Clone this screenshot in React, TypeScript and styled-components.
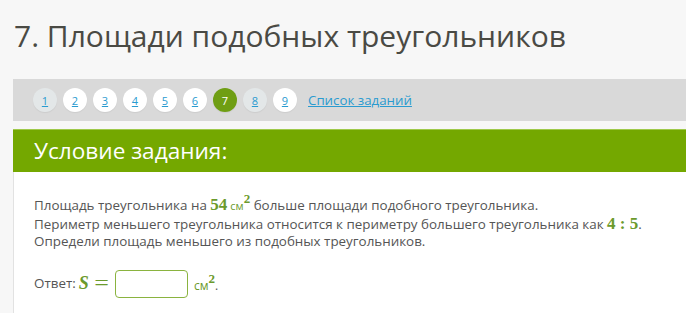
import React from "react";
import styled, { createGlobalStyle } from "styled-components";

const Global = createGlobalStyle`
  html, body { margin: 0; padding: 0; }
  body {
    background: #f7f7f7;
    font-family: "Open Sans", "Noto Sans", sans-serif;
    overflow: hidden;
  }
`;

const Page = styled.div`
  width: 686px;
  height: 313px;
  padding-top: 15px;
  box-sizing: border-box;
  overflow: hidden;
`;

const Title = styled.h1`
  margin: 0 0 23px 14px;
  font-size: 30px;
  line-height: 41px;
  font-weight: 400;
  color: #4a4a44;
  white-space: nowrap;
`;

const Nav = styled.nav`
  margin-left: 13px;
  height: 42px;
  background: #d9d9d9;
  display: flex;
  align-items: center;
  padding-left: 20px;
  gap: 6px;
`;

const Pill = styled.a<{ $state: "visited" | "normal" | "current" }>`
  width: 24px;
  height: 24px;
  border-radius: 50%;
  display: flex;
  align-items: center;
  justify-content: center;
  font-size: 11px;
  color: ${(p) => (p.$state === "current" ? "#ffffff" : "#2a9bd0")};
  text-decoration: ${(p) => (p.$state === "current" ? "none" : "underline")};
  background: ${(p) =>
    p.$state === "current" ? "#6f9e13" : p.$state === "visited" ? "#e3e7e8" : "#ffffff"};
  box-shadow: 0 1px 1px rgba(0, 0, 0, 0.06);
`;

const ListLink = styled.a`
  margin-left: 5px;
  font-size: 13.3px;
  color: #2a9bd0;
  text-decoration: underline;
  white-space: nowrap;
`;

const Card = styled.section`
  margin: 8px 0 0 13px;
`;

const CardHeader = styled.div`
  height: 42px;
  background: #74a800;
  border-top: 1px solid #9fc94a;
  padding-left: 21px;
  color: #ffffff;
  font-size: 22.6px;
  line-height: 42px;
  white-space: nowrap;
`;

const CardBody = styled.div`
  background: #ffffff;
  border-left: 1px solid #e2e2e2;
  padding: 24px 0 0 20px;
  color: #555555;
  font-size: 13.4px;
  line-height: 17.5px;
  height: 150px;
  box-sizing: border-box;
`;

const Line = styled.div`
  white-space: nowrap;
`;

const MathNum = styled.span`
  font-family: "Liberation Serif", "DejaVu Serif", serif;
  font-size: 17px;
  font-weight: 700;
  color: #6b9a2c;
`;

const MathUnit = styled.span`
  font-family: "Open Sans", sans-serif;
  font-size: 11px;
  color: #6b9a2c;
  margin-left: 3px;
`;

const Sup = styled.sup`
  font-family: "Liberation Serif", "DejaVu Serif", serif;
  font-size: 13px;
  font-weight: 700;
  line-height: 0;
  vertical-align: 7px;
  color: #6b9a2c;
`;

const MathVar = styled.span`
  font-family: "Liberation Serif", "DejaVu Serif", serif;
  font-style: italic;
  font-weight: 700;
  font-size: 18px;
  color: #6b9a2c;
  margin-left: 3px;
`;

const AnswerRow = styled.div`
  margin-top: 19px;
  display: flex;
  align-items: center;
  white-space: nowrap;
`;

const Eq = styled.span`
  font-family: "Liberation Serif", "DejaVu Serif", serif;
  font-size: 20px;
  color: #6b9a2c;
  margin: 0 8px 0 7px;
  transform: scaleX(1.3);
`;

const Input = styled.input`
  width: 73px;
  height: 28px;
  box-sizing: border-box;
  border: 1px solid #8ab33f;
  border-radius: 4px;
  background: #fff;
  outline: none;
  margin: 0 6px 0 0;
  padding: 0;
`;

const UnitGroup = styled.span`
  color: #6b9a2c;
  font-size: 12px;
  padding-top: 4px;
`;

const Dot = styled.span`
  color: #555;
`;

export default function App() {
  const pills = [1, 2, 3, 4, 5, 6, 7, 8, 9];
  return (
    <>
      <Global />
      <Page>
        <Title>7. Площади подобных треугольников</Title>
        <Nav>
          {pills.map((n) => (
            <Pill
              key={n}
              $state={n === 7 ? "current" : n === 1 || n === 8 ? "visited" : "normal"}
            >
              {n}
            </Pill>
          ))}
          <ListLink>Список заданий</ListLink>
        </Nav>
        <Card>
          <CardHeader>Условие задания:</CardHeader>
          <CardBody>
            <Line>
              Площадь треугольника на <MathNum>54</MathNum>
              <MathUnit>см</MathUnit>
              <Sup>2</Sup> больше площади подобного треугольника.
            </Line>
            <Line>
              Периметр меньшего треугольника относится к периметру большего треугольника как{" "}
              <MathNum>4 : 5</MathNum>.
            </Line>
            <Line>Определи площадь меньшего из подобных треугольников.</Line>
            <AnswerRow>
              Ответ:<MathVar>S</MathVar>
              <Eq>=</Eq>
              <Input />
              <UnitGroup>
                см<Sup>2</Sup>
                <Dot>.</Dot>
              </UnitGroup>
            </AnswerRow>
          </CardBody>
        </Card>
      </Page>
    </>
  );
}
